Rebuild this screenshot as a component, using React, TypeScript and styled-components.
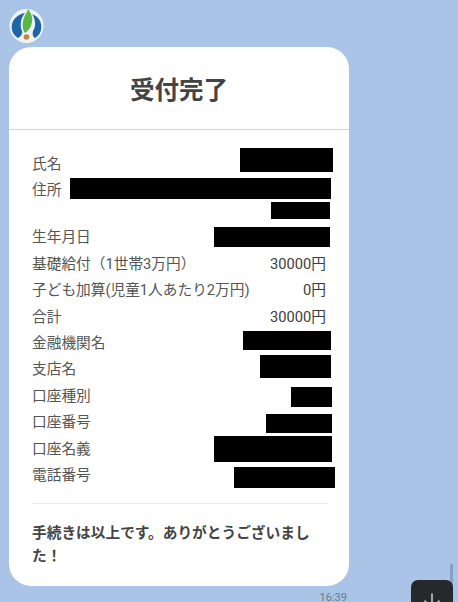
import React from "react";
import styled, { createGlobalStyle } from "styled-components";
import { ArrowDown } from "lucide-react";

const GlobalStyle = createGlobalStyle`
  html, body {
    margin: 0;
    padding: 0;
    background: #a9c4e6;
  }
  body {
    font-family: Roboto, "Noto Sans CJK JP", "Noto Sans", sans-serif;
  }
`;

const Screen = styled.div`
  position: relative;
  width: 458px;
  height: 602px;
  overflow: hidden;
  background: #a9c4e6;
  padding: 8px 0 0 9px;
  box-sizing: border-box;
`;

const Avatar = styled.div`
  width: 35px;
  height: 36px;
  margin-bottom: 3px;
  svg {
    display: block;
  }
`;

const Card = styled.div`
  width: 340px;
  height: 539px;
  background: #fff;
  border-radius: 22px;
  box-sizing: border-box;
`;

const Header = styled.div`
  height: 83px;
  border-bottom: 1px solid #d4d4d4;
  display: flex;
  align-items: center;
  justify-content: center;
  padding-top: 1px;
  box-sizing: border-box;
`;

const Title = styled.h1`
  margin: 0;
  font-size: 24.5px;
  font-weight: 700;
  color: #444;
`;

const Body = styled.div`
  padding: 20px 23px 0 23px;
`;

const Row = styled.div<{ $height?: number }>`
  height: ${(p) => p.$height ?? 26.4}px;
  display: flex;
  justify-content: space-between;
  align-items: flex-start;
  font-size: 14.7px;
  line-height: 28.5px;
  color: #555;
`;

const Label = styled.span`
  white-space: nowrap;
`;

const Value = styled.span`
  white-space: nowrap;
  color: #3c3c3c;
`;

const Stack = styled.div`
  display: flex;
  flex-direction: column;
  align-items: flex-end;
`;

const Redact = styled.div<{ $w: number; $h: number; $top: number; $right?: number; }>`
  flex: none;
  width: ${(p) => p.$w}px;
  height: ${(p) => p.$h}px;
  margin-top: ${(p) => p.$top}px;
  margin-right: ${(p) => -(p.$right ?? 5)}px;
  background: #000;
`;

const Rule = styled.div`
  height: 1px;
  background: #ececec;
  margin: 16px -2px 0 0;
`;

const Note = styled.p`
  margin: 18px 0 0;
  font-size: 14.7px;
  line-height: 23px;
  font-weight: 700;
  color: #444;
`;

const Time = styled.div`
  width: 340px;
  padding-right: 2px;
  box-sizing: border-box;
  margin-top: 5px;
  text-align: right;
  font-size: 11px;
  line-height: 14px;
  color: #6a7a92;
`;

const ScrollThumb = styled.div`
  position: absolute;
  left: 450px;
  top: 564px;
  width: 3px;
  height: 30px;
  background: #8a9fc4;
`;

const DownButton = styled.button`
  position: absolute;
  left: 411px;
  top: 580px;
  width: 42px;
  height: 42px;
  padding: 0;
  border: none;
  border-radius: 7px;
  background: #26282c;
  color: #c4c6c8;
  display: flex;
  justify-content: center;
  padding-top: 9px;
  box-sizing: border-box;
`;

const Logo = () => (
  <svg width="35" height="36" viewBox="0 0 35 36">
    <circle cx="17.5" cy="18" r="17" fill="#eef4f6" />
    <path d="M3 22C1 12 9 6 16 5 11 11 11 19 13 23 14 26 11 29 9 30 6 28 4 26 3 22Z" fill="#1f66a8" />
    <path d="M32 22C34 13 28 8 23 6 27 12 27 19 24 23 23 26 24 29 26 30 29 28 31 26 32 22Z" fill="#1f66a8" />
    <path d="M19 1C22 5 24 9 23 14 22 20 19 23 16 25 13 21 13 15 15 10 16 7 18 4 19 1Z" fill="#58b947" />
    <circle cx="17.5" cy="29" r="2.8" fill="#c9813f" />
  </svg>
);

export default function App() {
  return (
    <Screen>
      <GlobalStyle />
      <Avatar>
        <Logo />
      </Avatar>
      <Card>
        <Header>
          <Title>受付完了</Title>
        </Header>
        <Body>
          <Row>
            <Label>氏名</Label>
            <Redact $w={93} $h={24} $top={-2} $right={7} />
          </Row>
          <Row $height={47}>
            <Label>住所</Label>
            <Stack>
              <Redact $w={261} $h={21} $top={2} />
              <Redact $w={59} $h={17} $top={3} $right={4} />
            </Stack>
          </Row>
          <Row>
            <Label>生年月日</Label>
            <Redact $w={116} $h={20} $top={4} $right={4} />
          </Row>
          <Row>
            <Label>基礎給付（1世帯3万円）</Label>
            <Value>30000円</Value>
          </Row>
          <Row>
            <Label>子ども加算(児童1人あたり2万円)</Label>
            <Value>0円</Value>
          </Row>
          <Row>
            <Label>合計</Label>
            <Value>30000円</Value>
          </Row>
          <Row>
            <Label>金融機関名</Label>
            <Redact $w={88} $h={19} $top={2} />
          </Row>
          <Row>
            <Label>支店名</Label>
            <Redact $w={71} $h={23} $top={0} />
          </Row>
          <Row>
            <Label>口座種別</Label>
            <Redact $w={41} $h={20} $top={5} $right={6} />
          </Row>
          <Row>
            <Label>口座番号</Label>
            <Redact $w={66} $h={19} $top={6} $right={6} />
          </Row>
          <Row>
            <Label>口座名義</Label>
            <Redact $w={118} $h={26} $top={1} $right={6} />
          </Row>
          <Row>
            <Label>電話番号</Label>
            <Redact $w={101} $h={21} $top={6} $right={9} />
          </Row>
          <Rule />
          <Note>手続きは以上です。ありがとうございました！</Note>
        </Body>
      </Card>
      <Time>16:39</Time>
      <ScrollThumb />
      <DownButton aria-label="down">
        <ArrowDown size={24} strokeWidth={1.6} />
      </DownButton>
    </Screen>
  );
}
